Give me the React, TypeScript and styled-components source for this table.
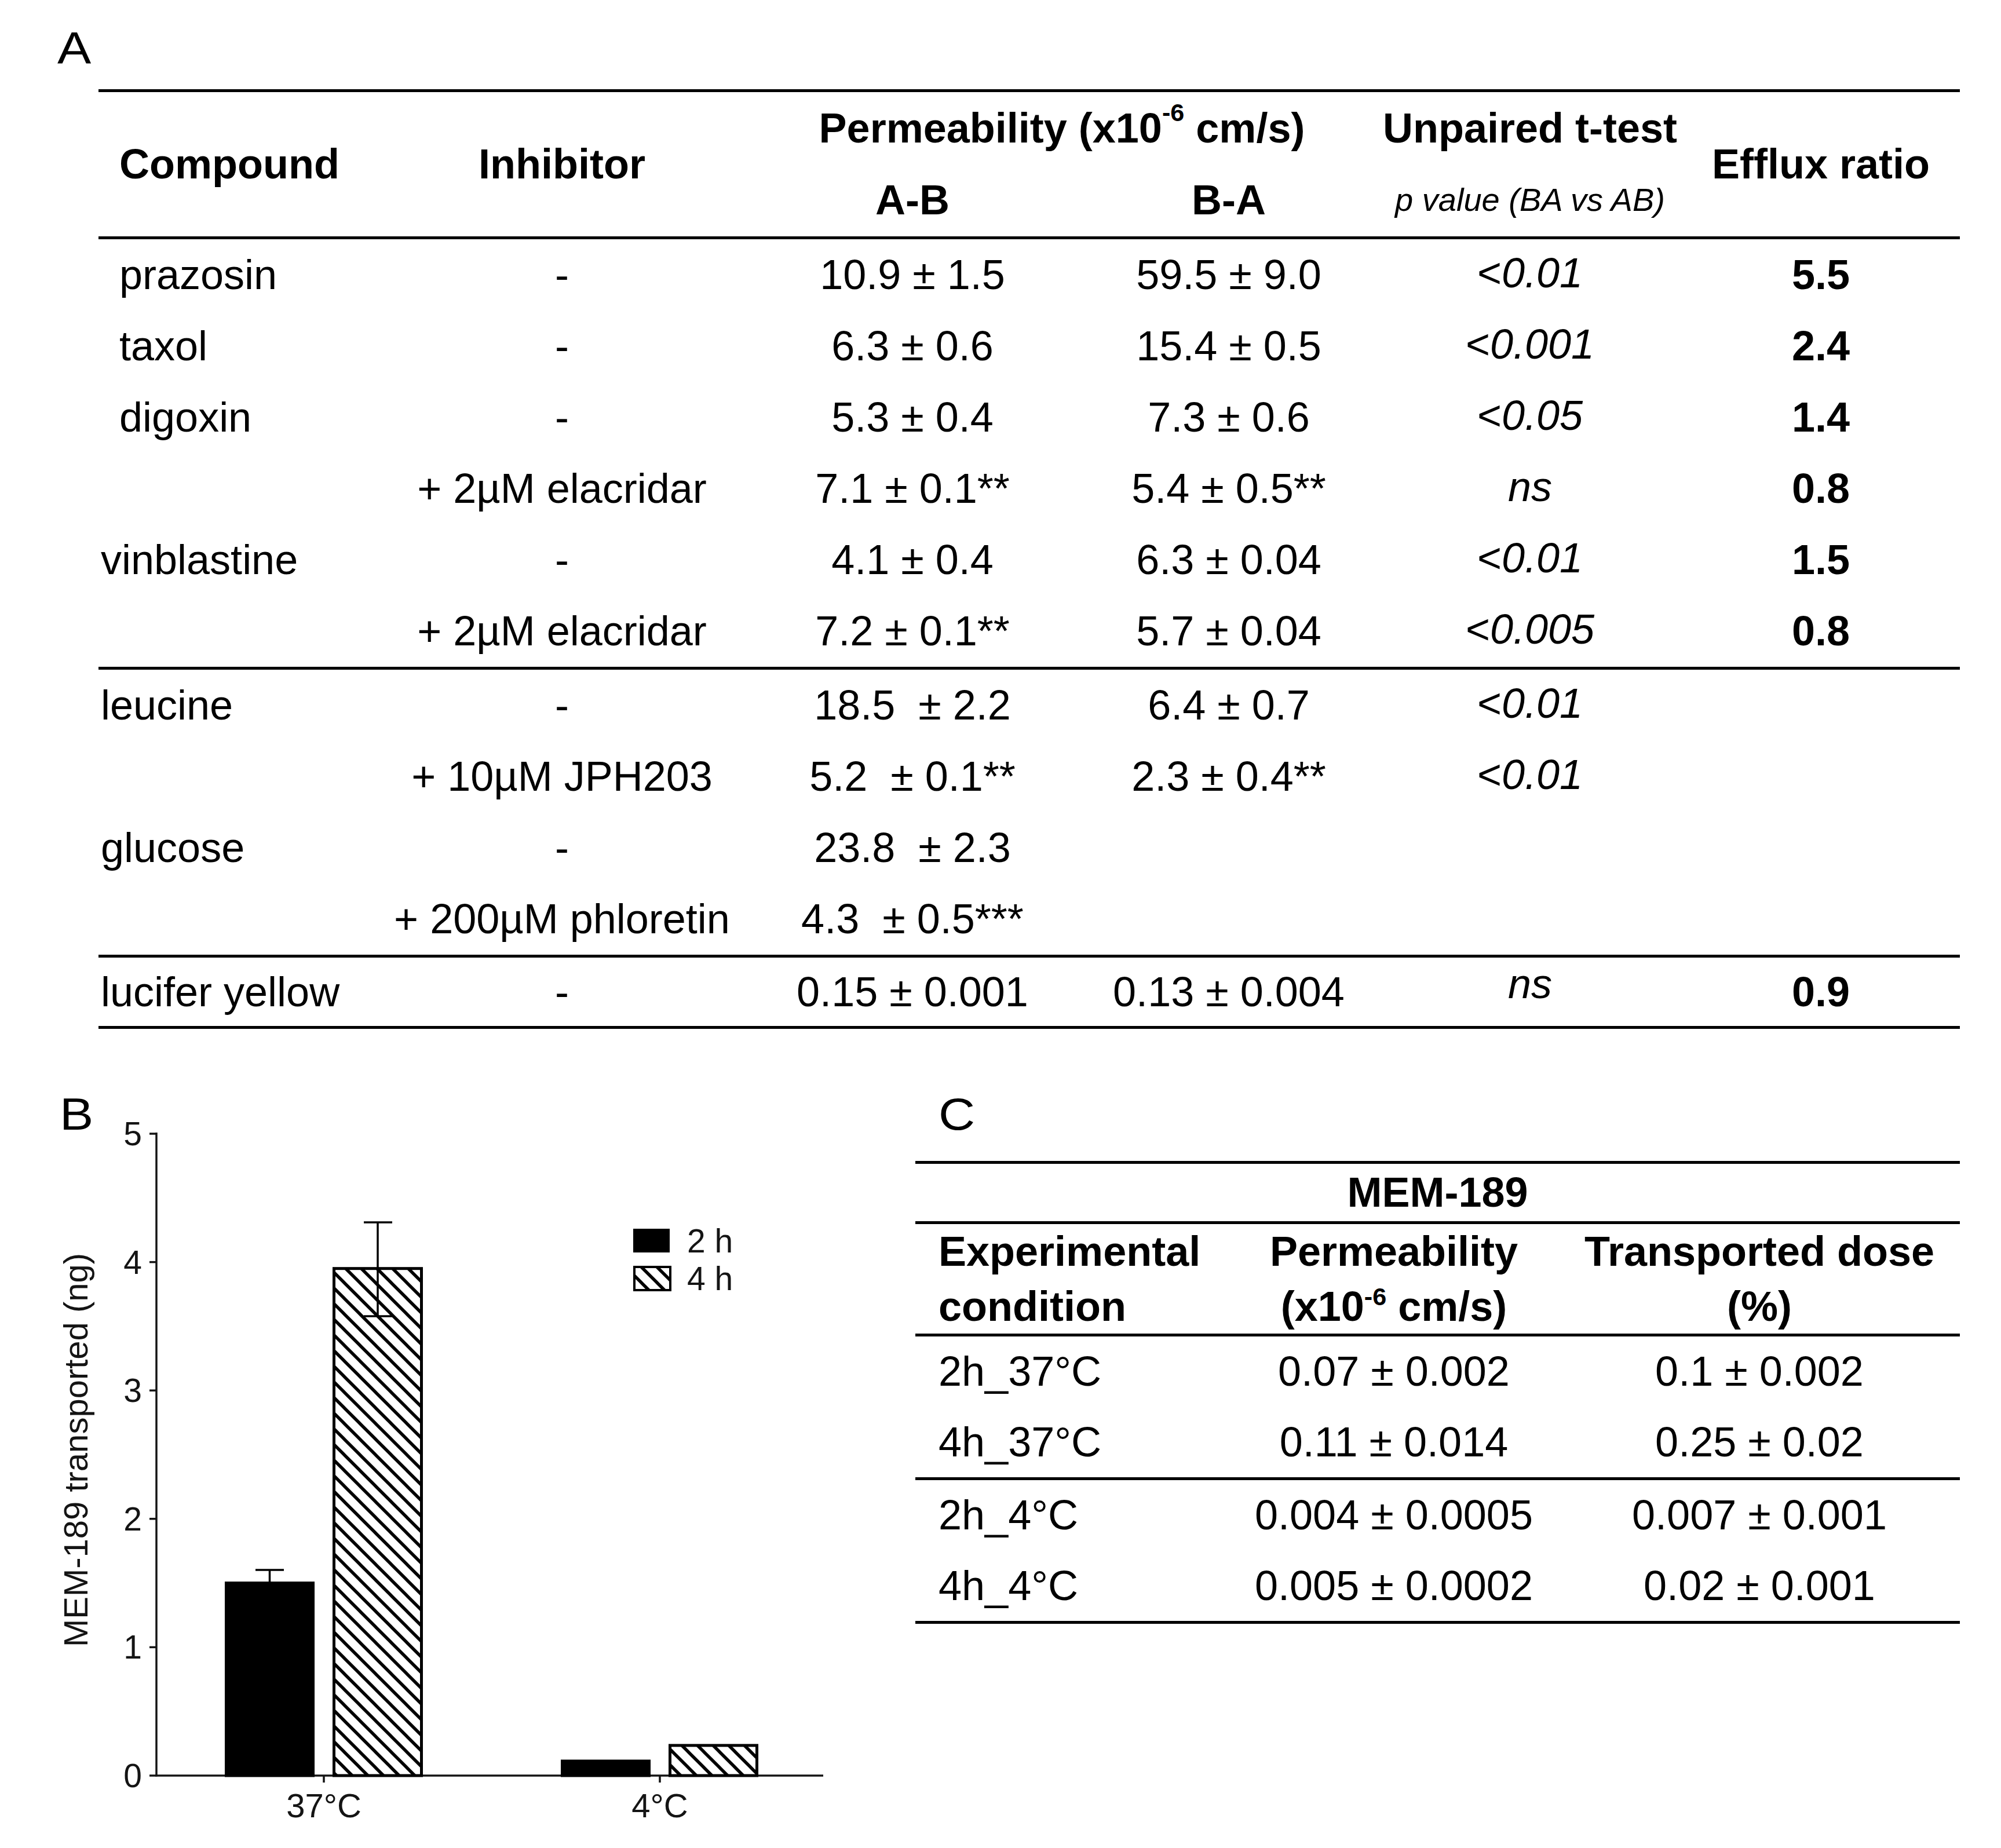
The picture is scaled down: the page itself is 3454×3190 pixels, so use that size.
import React from "react";
import styled, { createGlobalStyle } from "styled-components";

const GlobalStyle = createGlobalStyle`
  html, body { margin: 0; padding: 0; background: #ffffff; }
  body { font-family: "Liberation Sans", Arial, sans-serif; color: #000; }
`;

const GRID_A = "483px 634px 576px 516px 524px 480px";
const GRID_C = "541px 570px 692px";

const Page = styled.div`
  width: 3454px;
  min-height: 3190px;
  box-sizing: border-box;
  padding-top: 44px;
  background: #fff;
  display: flex;
  flex-direction: column;
`;

const PanelLabel = styled.div<{ $indent: number; $top?: number }>`
  font-size: 78px;
  line-height: 78px;
  height: 78px;
  margin-left: ${(p) => p.$indent}px;
  margin-top: ${(p) => p.$top ?? 0}px;
  align-self: start;
  transform: scaleX(1.12);
  transform-origin: left center;
`;

/* ---------- Table A ---------- */
const TableA = styled.div`
  margin: 31.5px 0 0 170px;
  width: 3213px;
  border-top: 5px solid #000;
  display: flex;
  flex-direction: column;
`;

const HeadA = styled.div`
  display: grid;
  grid-template-columns: ${GRID_A};
  grid-template-rows: 124.5px 124.5px;
  border-bottom: 5px solid #000;
  font-size: 72px;
  line-height: 1;
  font-weight: 700;
`;

const HeadCell = styled.div<{ $col: string; $row: string; $left?: number }>`
  grid-column: ${(p) => p.$col};
  grid-row: ${(p) => p.$row};
  display: flex;
  align-items: center;
  justify-content: ${(p) => (p.$left !== undefined ? "flex-start" : "center")};
  padding-left: ${(p) => p.$left ?? 0}px;
  white-space: pre;
`;

const SubHead = styled.span`
  font-size: 56px;
  font-weight: 400;
  font-style: italic;
`;

const Sup = styled.sup`
  font-size: 0.6em;
  line-height: 0;
  vertical-align: baseline;
  position: relative;
  top: -0.62em;
`;

const Group = styled.div`
  border-bottom: 5px solid #000;
  display: flex;
  flex-direction: column;
`;

const RowA = styled.div<{ $h: number }>`
  display: grid;
  grid-template-columns: ${GRID_A};
  height: ${(p) => p.$h}px;
  align-items: center;
  font-size: 72px;
  line-height: 1;
`;

const NameCell = styled.div<{ $indent: boolean }>`
  padding-left: ${(p) => (p.$indent ? 36 : 4)}px;
  white-space: pre;
`;

const Cell = styled.div<{ $bold?: boolean }>`
  text-align: center;
  white-space: pre;
  font-weight: ${(p) => (p.$bold ? 700 : 400)};
`;

const PCell = styled.div<{ $lift?: boolean }>`
  text-align: center;
  white-space: pre;
  font-style: italic;
  padding-bottom: ${(p) => (p.$lift ? 28 : 6)}px;
`;

const Lt = styled.span`
  font-style: normal;
`;

/* ---------- Bottom ---------- */
const BottomRow = styled.div`
  margin-top: 104.5px;
  display: flex;
  flex-direction: row;
`;

const ChartPanel = styled.div`
  width: 1580px;
  display: grid;
  & > * {
    grid-area: 1 / 1;
  }
`;

const ChartSvg = styled.svg`
  display: block;
  width: 1580px;
  height: 1310px;
  font-family: "Liberation Sans", Arial, sans-serif;
`;

const CPanel = styled.div`
  width: 1803px;
  display: flex;
  flex-direction: column;
`;

const TableC = styled.div`
  margin-top: 41.5px;
  border-top: 5px solid #000;
  display: flex;
  flex-direction: column;
  font-size: 72px;
  line-height: 1;
`;

const TitleRow = styled.div`
  height: 99px;
  border-bottom: 5px solid #000;
  display: flex;
  align-items: center;
  justify-content: center;
  font-weight: 700;
`;

const HeadC = styled.div`
  display: grid;
  grid-template-columns: ${GRID_C};
  height: 189px;
  border-bottom: 5px solid #000;
  font-weight: 700;
  line-height: 95px;
  align-items: center;
`;

const HeadCCell = styled.div<{ $left?: boolean }>`
  text-align: ${(p) => (p.$left ? "left" : "center")};
  padding-left: ${(p) => (p.$left ? 40 : 0)}px;
  white-space: pre;
`;

const RowC = styled.div`
  display: grid;
  grid-template-columns: ${GRID_C};
  height: 121.5px;
  align-items: center;
`;

const CCell = styled.div<{ $left?: boolean }>`
  text-align: ${(p) => (p.$left ? "left" : "center")};
  padding-left: ${(p) => (p.$left ? 40 : 0)}px;
  white-space: pre;
`;

/* ---------- Data ---------- */
type ARow = {
  name?: string;
  indent?: boolean;
  inh: string;
  ab: string;
  ba: string;
  p: string;
  er: string;
  h?: number;
  lift?: boolean;
};

const groupsA: ARow[][] = [
  [
    { name: "prazosin", indent: true, inh: "-", ab: "10.9 ± 1.5", ba: "59.5 ± 9.0", p: "<0.01", er: "5.5" },
    { name: "taxol", indent: true, inh: "-", ab: "6.3 ± 0.6", ba: "15.4 ± 0.5", p: "<0.001", er: "2.4" },
    { name: "digoxin", indent: true, inh: "-", ab: "5.3 ± 0.4", ba: "7.3 ± 0.6", p: "<0.05", er: "1.4" },
    { inh: "+ 2µM elacridar", ab: "7.1 ± 0.1**", ba: "5.4 ± 0.5**", p: "ns", er: "0.8" },
    { name: "vinblastine", inh: "-", ab: "4.1 ± 0.4", ba: "6.3 ± 0.04", p: "<0.01", er: "1.5" },
    { inh: "+ 2µM elacridar", ab: "7.2 ± 0.1**", ba: "5.7 ± 0.04", p: "<0.005", er: "0.8" },
  ],
  [
    { name: "leucine", inh: "-", ab: "18.5  ± 2.2", ba: "6.4 ± 0.7", p: "<0.01", er: "" },
    { inh: "+ 10µM JPH203", ab: "5.2  ± 0.1**", ba: "2.3 ± 0.4**", p: "<0.01", er: "" },
    { name: "glucose", inh: "-", ab: "23.8  ± 2.3", ba: "", p: "", er: "" },
    { inh: "+ 200µM phloretin", ab: "4.3  ± 0.5***", ba: "", p: "", er: "" },
  ],
  [{ name: "lucifer yellow", inh: "-", ab: "0.15 ± 0.001", ba: "0.13 ± 0.004", p: "ns", er: "0.9", h: 118, lift: true }],
];

const groupsC: [string, string, string][][] = [
  [
    ["2h_37°C", "0.07 ± 0.002", "0.1 ± 0.002"],
    ["4h_37°C", "0.11 ± 0.014", "0.25 ± 0.02"],
  ],
  [
    ["2h_4°C", "0.004 ± 0.0005", "0.007 ± 0.001"],
    ["4h_4°C", "0.005 ± 0.0002", "0.02 ± 0.001"],
  ],
];

const PValue: React.FC<{ v: string }> = ({ v }) =>
  v.startsWith("<") ? (
    <>
      <Lt>{"<"}</Lt>
      {v.slice(1)}
    </>
  ) : (
    <>{v}</>
  );

/* ---------- Chart ---------- */
const Y0 = 3065;
const UNIT = 221.6;
const yv = (v: number) => Y0 - v * UNIT;
const INK = "#141414";

type Bar = { x: number; w: number; v: number; hatch: boolean };
const bars: Bar[] = [
  { x: 388, w: 155, v: 1.5, hatch: false },
  { x: 574, w: 156, v: 3.95, hatch: true },
  { x: 968, w: 155, v: 0.113, hatch: false },
  { x: 1154, w: 155, v: 0.235, hatch: true },
];

const Chart: React.FC = () => (
  <ChartSvg viewBox="0 1880 1580 1310">
    <defs>
      <pattern id="hatch" patternUnits="userSpaceOnUse" width="27" height="27">
        <rect width="27" height="27" fill="#fff" />
        <path d="M-5,-5 L32,32 M-5,22 L5,32 M22,-5 L32,5" stroke="#000" strokeWidth="5.5" />
      </pattern>
    </defs>

    {/* y axis title */}
    <text
      x={130}
      y={2503}
      transform="rotate(-90 130 2503)"
      textAnchor="middle"
      dominantBaseline="central"
      fontSize={58}
      fill={INK}
    >
      MEM-189 transported (ng)
    </text>

    {/* axes */}
    <line x1={270} y1={1955} x2={270} y2={3066.5} stroke={INK} strokeWidth={3.5} />
    <line x1={268.5} y1={Y0} x2={1421} y2={Y0} stroke={INK} strokeWidth={3.5} />

    {[0, 1, 2, 3, 4, 5].map((t) => (
      <g key={t}>
        <line x1={258} y1={yv(t)} x2={270} y2={yv(t)} stroke={INK} strokeWidth={3.5} />
        <text x={245} y={yv(t)} textAnchor="end" dominantBaseline="central" fontSize={57} fill={INK}>
          {t}
        </text>
      </g>
    ))}

    {[
      { x: 559, l: "37°C" },
      { x: 1139, l: "4°C" },
    ].map((g) => (
      <g key={g.l}>
        <line x1={g.x} y1={Y0} x2={g.x} y2={Y0 + 12} stroke={INK} strokeWidth={3.5} />
        <text x={g.x} y={3116} textAnchor="middle" dominantBaseline="central" fontSize={58} fill={INK}>
          {g.l}
        </text>
      </g>
    ))}

    {/* bars */}
    {bars.map((b, i) => (
      <rect
        key={i}
        x={b.x + 2.5}
        y={yv(b.v)}
        width={b.w - 5}
        height={Y0 - yv(b.v)}
        fill={b.hatch ? "url(#hatch)" : "#000"}
        stroke="#000"
        strokeWidth={5}
      />
    ))}

    {/* error bars */}
    <line x1={465.5} y1={yv(1.5)} x2={465.5} y2={2710} stroke="#000" strokeWidth={3.5} />
    <line x1={441} y1={2710} x2={490} y2={2710} stroke="#000" strokeWidth={3.5} />
    <line x1={652} y1={2110} x2={652} y2={2272} stroke="#000" strokeWidth={3.5} />
    <line x1={628} y1={2110} x2={677} y2={2110} stroke="#000" strokeWidth={3.5} />
    <line x1={628} y1={2272} x2={677} y2={2272} stroke="#000" strokeWidth={3.5} />

    {/* legend */}
    <rect x={1093} y={2121} width={63} height={41} fill="#000" />
    <rect x={1095} y={2187} width={62} height={40} fill="url(#hatch)" stroke="#000" strokeWidth={4} />
    <text x={1186} y={2142} dominantBaseline="central" fontSize={57} fill={INK}>
      2 h
    </text>
    <text x={1186} y={2207} dominantBaseline="central" fontSize={57} fill={INK}>
      4 h
    </text>
  </ChartSvg>
);

/* ---------- App ---------- */
export default function App() {
  return (
    <Page>
      <GlobalStyle />
      <PanelLabel $indent={99}>A</PanelLabel>

      <TableA>
        <HeadA>
          <HeadCell $col="1" $row="1 / span 2" $left={36}>
            Compound
          </HeadCell>
          <HeadCell $col="2" $row="1 / span 2">
            Inhibitor
          </HeadCell>
          <HeadCell $col="3 / span 2" $row="1">
            Permeability (x10<Sup>-6</Sup> cm/s)
          </HeadCell>
          <HeadCell $col="5" $row="1">
            Unpaired t-test
          </HeadCell>
          <HeadCell $col="6" $row="1 / span 2">
            Efflux ratio
          </HeadCell>
          <HeadCell $col="3" $row="2">
            A-B
          </HeadCell>
          <HeadCell $col="4" $row="2">
            B-A
          </HeadCell>
          <HeadCell $col="5" $row="2">
            <SubHead>p value (BA vs AB)</SubHead>
          </HeadCell>
        </HeadA>

        {groupsA.map((g, gi) => (
          <Group key={gi}>
            {g.map((r, ri) => (
              <RowA key={ri} $h={r.h ?? 123}>
                <NameCell $indent={!!r.indent}>{r.name ?? ""}</NameCell>
                <Cell>{r.inh}</Cell>
                <Cell>{r.ab}</Cell>
                <Cell>{r.ba}</Cell>
                <PCell $lift={r.lift}>
                  <PValue v={r.p} />
                </PCell>
                <Cell $bold>{r.er}</Cell>
              </RowA>
            ))}
          </Group>
        ))}
      </TableA>

      <BottomRow>
        <ChartPanel>
          <Chart />
          <PanelLabel $indent={103} $top={4}>
            B
          </PanelLabel>
        </ChartPanel>

        <CPanel>
          <PanelLabel $indent={40} $top={4}>
            C
          </PanelLabel>
          <TableC>
            <TitleRow>MEM-189</TitleRow>
            <HeadC>
              <HeadCCell $left>{"Experimental\ncondition"}</HeadCCell>
              <HeadCCell>
                Permeability
                <br />
                (x10<Sup>-6</Sup> cm/s)
              </HeadCCell>
              <HeadCCell>{"Transported dose\n(%)"}</HeadCCell>
            </HeadC>
            {groupsC.map((g, gi) => (
              <Group key={gi}>
                {g.map((r, ri) => (
                  <RowC key={ri}>
                    <CCell $left>{r[0]}</CCell>
                    <CCell>{r[1]}</CCell>
                    <CCell>{r[2]}</CCell>
                  </RowC>
                ))}
              </Group>
            ))}
          </TableC>
        </CPanel>
      </BottomRow>
    </Page>
  );
}
